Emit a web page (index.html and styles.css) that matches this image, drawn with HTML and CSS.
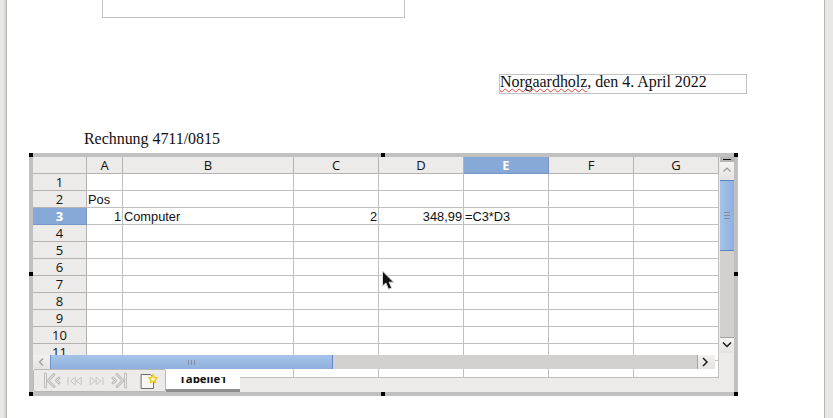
FILE: index.html
```html
<!DOCTYPE html>
<html lang="de">
<head>
<meta charset="utf-8">
<title>Rechnung</title>
<link rel="stylesheet" href="styles.css">
</head>
<body>
<div class="desk">
  <main class="page">
    <div class="address-box"></div>
    <div class="date-box"><span class="misspelt">Norgaardholz</span>, den 4. April 2022</div>
    <p class="heading">Rechnung 4711/0815</p>
    <section class="ole">
      <i class="handle h-tl"></i><i class="handle h-tc"></i><i class="handle h-tr"></i>
      <i class="handle h-ml"></i><i class="handle h-mr"></i>
      <i class="handle h-bl"></i><i class="handle h-bc"></i><i class="handle h-br"></i>
      <div class="sheet">
        <div class="grid">
          <div class="corner"></div><div class="ch">A</div><div class="ch">B</div><div class="ch">C</div><div class="ch">D</div><div class="ch on">E</div><div class="ch">F</div><div class="ch">G</div>
          <div class="rh">1</div><div class="c"></div><div class="c"></div><div class="c"></div><div class="c"></div><div class="c"></div><div class="c"></div><div class="c"></div>
          <div class="rh">2</div><div class="c">Pos</div><div class="c"></div><div class="c"></div><div class="c"></div><div class="c"></div><div class="c"></div><div class="c"></div>
          <div class="rh on">3</div><div class="c r">1</div><div class="c">Computer</div><div class="c r">2</div><div class="c r">348,99</div><div class="c">=C3*D3</div><div class="c"></div><div class="c"></div>
          <div class="rh">4</div><div class="c"></div><div class="c"></div><div class="c"></div><div class="c"></div><div class="c"></div><div class="c"></div><div class="c"></div>
          <div class="rh">5</div><div class="c"></div><div class="c"></div><div class="c"></div><div class="c"></div><div class="c"></div><div class="c"></div><div class="c"></div>
          <div class="rh">6</div><div class="c"></div><div class="c"></div><div class="c"></div><div class="c"></div><div class="c"></div><div class="c"></div><div class="c"></div>
          <div class="rh">7</div><div class="c"></div><div class="c"></div><div class="c"></div><div class="c"></div><div class="c"></div><div class="c"></div><div class="c"></div>
          <div class="rh">8</div><div class="c"></div><div class="c"></div><div class="c"></div><div class="c"></div><div class="c"></div><div class="c"></div><div class="c"></div>
          <div class="rh">9</div><div class="c"></div><div class="c"></div><div class="c"></div><div class="c"></div><div class="c"></div><div class="c"></div><div class="c"></div>
          <div class="rh">10</div><div class="c"></div><div class="c"></div><div class="c"></div><div class="c"></div><div class="c"></div><div class="c"></div><div class="c"></div>
          <div class="rh">11</div><div class="c"></div><div class="c"></div><div class="c"></div><div class="c"></div><div class="c"></div><div class="c"></div><div class="c"></div>
          <div class="blank"></div><div class="c"></div><div class="c"></div><div class="c"></div><div class="c"></div><div class="c"></div><div class="c"></div><div class="c"></div>
        </div>
        <div class="hscroll">
          <div class="hbtn"><svg width="17" height="14" viewBox="0 0 17 14"><path d="M10 3.500 6.500 7l3.500 3.500" fill="none" stroke="#9a9a9a" stroke-width="1.200"/></svg></div>
          <div class="hthumb"><svg width="8" height="5" viewBox="0 0 8 5"><path d="M.5 0v5M3.500 0v5M6.500 0v5" stroke="#7f8ea3" stroke-width="1"/></svg></div>
          <div class="htrack"></div>
          <div class="hbtn end"><svg width="17" height="14" viewBox="0 0 17 14"><path d="M5 3 9 7l-4 4" fill="none" stroke="#1c1c1c" stroke-width="1.500"/></svg></div>
        </div>
        <div class="tabbar">
          <div class="tabnav">
            <svg class="navicons" width="125" height="21" viewBox="0 0 125 21" fill="none" stroke-linejoin="round" stroke-linecap="round">
              <g stroke="#bdbcba" stroke-width="3">
                <path d="M11.500 4v13M20 4.500l-6 6 6 6M25 8l-2.500 2.500L25 13M91.500 4v13M83 4.500l6 6-6 6M79 8l2.500 2.500L79 13"/>
              </g>
              <g stroke="#ecebe9" stroke-width="1">
                <path d="M11.500 4v13M20 4.500l-6 6 6 6M25 8l-2.500 2.500L25 13M91.500 4v13M83 4.500l6 6-6 6M79 8l2.500 2.500L79 13"/>
              </g>
              <g stroke="#c8c7c5" stroke-width="1">
                <path d="M34 7.500v7M41 7.500l-4.500 3.500 4.500 3.500zM47 7.500l-5 3.500 5 3.500z"/>
                <path d="M56.500 7.500l5 3.500-5 3.500zM62.500 7.500l4.500 3.500-4.500 3.500zM69 7.500v7"/>
              </g>
              <path d="M107.500 4.500h9l3 3v11h-12z" fill="#f7f6f4" stroke="#6d6d6d" stroke-width="1"/>
              <path d="M119 4.600l1.300 2.700 2.900.4-2.100 2 .5 2.900-2.600-1.400-2.600 1.400.5-2.900-2.100-2 2.900-.4z" fill="#fffbd0" stroke="#edcb22" stroke-width="1.500"/>
            </svg>
          </div>
          <div class="tab"><span>Tabelle1</span></div>
        </div>
        <div class="vscroll">
          <div class="vsplit"></div>
          <div class="vbtn"><svg width="14" height="14" viewBox="0 0 14 14"><path d="M3.500 7.500 7 4l3.500 3.500" fill="none" stroke="#9a9a9a" stroke-width="1.200"/></svg></div>
          <div class="vthumb"><svg width="6" height="7" viewBox="0 0 6 7"><path d="M0 .5h6M0 3.500h6M0 6.500h6" stroke="#7f8ea3" stroke-width="1"/></svg></div>
          <div class="vtrack"></div>
          <div class="vbtn down"><svg width="14" height="14" viewBox="0 0 14 14"><path d="M3 4.500 7 8.500l4-4" fill="none" stroke="#1c1c1c" stroke-width="1.500"/></svg></div>
        </div>
      </div>
      <svg class="cursor" width="15" height="21" viewBox="0 0 15 21"><path d="M1.500 1v15l3.400-3 2.600 6.200 3.200-1.300-2.600-5.700h4.600z" fill="#111" stroke="#d8d8d8" stroke-width="1"/></svg>
    </section>
  </main>
</div>
</body>
</html>
```
FILE: styles.css
```css
* { box-sizing: border-box; }
html, body { margin: 0; height: 100%; overflow: hidden; }
body { background: #e9e8e6; }
.desk { height: 418px; padding: 0 8px 0 6px; }
.page {
  position: relative;
  height: 418px;
  background: #fff;
  border-left: 1px solid #b9b8b6;
  border-right: 1px solid #b9b8b6;
  box-shadow: -2px 0 0 #d8d7d5;
  padding-left: 22px;
  font-family: "Liberation Serif", serif;
  color: #111;
}
.address-box {
  width: 303px;
  height: 18px;
  margin-left: 73px;
  border: 1px solid #c2c2c2;
  border-top: 0;
}
.date-box {
  width: 248px;
  height: 20px;
  margin: 56px 0 0 470px;
  border: 1px solid #c2c2c2;
  font-size: 16px;
  line-height: 14px;
  letter-spacing: -.03px;
  white-space: nowrap;
}
.misspelt { text-decoration: underline wavy #e2403c 1.300px; text-underline-offset: 1px; text-decoration-skip-ink: none; }
.heading { margin: 35px 0 0 55px; height: 24px; font-size: 16px; line-height: 20px; letter-spacing: -.05px; }
.ole {
  position: relative;
  width: 709px;
  height: 243px;
  padding: 4px;
  background: #c0c0c0;
}
.handle { position: absolute; width: 4px; height: 4px; background: #000; z-index: 5; }
.h-tl { left: 0; top: 0; }
.h-tc { left: 352px; top: 0; }
.h-tr { right: 0; top: 0; }
.h-ml { left: 0; top: 119px; }
.h-mr { right: 0; top: 119px; }
.h-bl { left: 0; bottom: 0; }
.h-bc { left: 352px; bottom: 0; }
.h-br { right: 0; bottom: 0; }
.sheet {
  position: relative;
  height: 235px;
  overflow: hidden;
  background: #ecebe9;
  font-family: "Liberation Sans", sans-serif;
}
.grid {
  display: grid;
  width: 686px;
  height: 221px;
  overflow: hidden;
  grid-template-columns: 54px 36px 171px 85px 85px 85px 85px 85px;
  grid-auto-rows: 17px;
  background: #fff;
}
.corner, .ch, .rh, .blank { background: #ecebe9; border-right: 1px solid #b4b3b1; border-bottom: 1px solid #b4b3b1; }
.blank { background: #fff; border-bottom: 0; }
.ch, .rh {
  font-family: "Open Sans", sans-serif;
  font-size: 13px;
  color: #111;
  text-align: center;
  line-height: 17px;
}
.ch.on, .rh.on { background: #87a9d7; color: #fff; font-weight: 700; border-color: #7596c6; }
.c {
  border-right: 1px solid #c0c0c0;
  border-bottom: 1px solid #c0c0c0;
  font-size: 12.800px;
  line-height: 17px;
  padding: 0 1px;
  color: #111;
  white-space: nowrap;
}
.r { text-align: right; }
.hscroll {
  position: absolute;
  left: 0;
  top: 198px;
  width: 682px;
  height: 14px;
  display: flex;
  background: #d2d1cf;
}
.hbtn {
  width: 18px;
  flex: none;
  display: flex;
  background: linear-gradient(#f2f1f0, #e4e3e1);
  border-right: 1px solid #6f93c6;
}
.hbtn.end { border-right: 0; border-left: 1px solid #a3a3a3; }
.hthumb {
  width: 282px;
  flex: none;
  display: flex;
  align-items: center;
  justify-content: center;
  background: linear-gradient(#a6c4e8, #8fb0de);
  border-right: 1px solid #5e86c0;
}
.htrack { flex: 1; }
.tabbar {
  position: absolute;
  left: 0;
  top: 212px;
  display: flex;
  align-items: flex-start;
  height: 23px;
}
.tabnav {
  width: 133px;
  height: 23px;
  display: flex;
  align-items: flex-start;
  background: #ecebe9;
  border: 1px solid #b9b8b6;
  border-radius: 2px;
}
.navicons { flex: none; }
.tab {
  width: 74px;
  height: 15px;
  margin-top: 8px;
  overflow: hidden;
  background: #fff;
  border-bottom: 3px solid #8e8e8e;
  text-align: center;
  font-family: "Open Sans", sans-serif;
  font-size: 11.400px;
  font-weight: 700;
  line-height: 14px;
  color: #111;
}
.tab span { display: block; margin-top: -5px; }
.vscroll {
  position: absolute;
  top: 0;
  right: 0;
  width: 14px;
  height: 196px;
  display: flex;
  flex-direction: column;
}
.vsplit {
  height: 5px;
  flex: none;
  background: #b5b5b5;
  position: relative;
}
.vsplit::after { content: ""; position: absolute; left: 3px; right: 3px; top: 2px; height: 1px; background: #111; }
.vbtn { height: 18px; flex: none; background: linear-gradient(#f5f4f3, #e4e3e1); display: flex; align-items: center; }
.vthumb {
  height: 71px;
  flex: none;
  display: flex;
  align-items: center;
  justify-content: center;
  background: linear-gradient(90deg, #a6c4e8, #8fb0de);
  border-top: 1px solid #5e86c0;
  border-bottom: 1px solid #5e86c0;
}
.vtrack { flex: 1; background: #d2d1cf; border-bottom: 1px solid #a3a3a3; }
.vbtn.down { height: 15px; align-items: flex-start; }
.cursor { position: absolute; left: 352px; top: 117px; z-index: 6; }
```
